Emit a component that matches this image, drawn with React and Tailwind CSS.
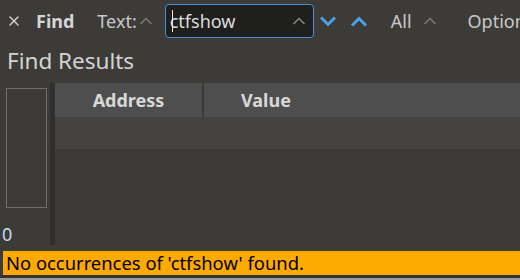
import { X } from "lucide-react";

const Caret = ({ className = "", up = true, color = "#7d7c79", stroke = 1.5 }) => (
  <svg width="14" height="10" viewBox="0 0 14 10" className={`shrink-0 ${className}`}>
    <polyline
      points={up ? "1.5,8 7,2.5 12.5,8" : "1.5,2 7,7.5 12.5,2"}
      fill="none"
      stroke={color}
      strokeWidth={stroke}
    />
  </svg>
);

const BlueChevron = ({ up, className = "" }) => (
  <svg width="18" height="11" viewBox="0 0 18 11" className={`shrink-0 ${className}`}>
    <polyline
      points={up ? "2,9.5 9,2.5 16,9.5" : "2,1.5 9,8.5 16,1.5"}
      fill="none"
      stroke="#4f9fe6"
      strokeWidth="3"
    />
  </svg>
);

export default function App() {
  return (
    <div
      className="w-[520px] h-[280px] bg-[#3c3b38] flex flex-col overflow-hidden text-[#d6d6d6]"
      style={{ fontFamily: '"Segoe UI", "Noto Sans", "Open Sans", sans-serif' }}
    >
      {/* toolbar */}
      <div className="h-[42px] flex items-center shrink-0 text-[18px] whitespace-nowrap">
        <X size={16} strokeWidth={2.2} className="ml-[6px] shrink-0 text-[#d0d0d0]" />
        <span className="ml-[14px] font-bold">Find</span>
        <span className="ml-[23px] text-[#c8c8c8]">Text:</span>
        <Caret className="ml-[2px]" />
        <div className="ml-[12px] w-[149px] h-[34px] shrink-0 rounded-[4px] border-[1.5px] border-[#4d8ed0] bg-[#1f1f1e] flex items-center pl-[4px] pr-[7px]">
          <span className="relative text-[#dcdcdc]">
            ctfshow
            <span className="absolute left-[2px] top-[2px] w-[1.5px] h-[22px] bg-[#e6e6e6]" />
          </span>
          <Caret className="ml-auto" color="#8a8a88" />
        </div>
        <BlueChevron className="ml-[5px]" />
        <BlueChevron up className="ml-[13px]" />
        <span className="ml-[23px] text-[#c8c8c8]">All</span>
        <Caret className="ml-[11px]" />
        <span className="ml-[31px] text-[#c8c8c8]">Options</span>
      </div>

      {/* title */}
      <div className="h-[39px] shrink-0 pl-[7px] pt-[5px] text-[22.5px] text-[#d4d4d4] leading-[28px]">
        Find Results
      </div>

      {/* results */}
      <div className="flex flex-1 min-h-0">
        <div className="w-[50px] flex flex-col shrink-0">
          <div className="ml-[6px] mt-[7px] w-[41px] h-[120px] border-[1.5px] border-[#6f6e6b]" />
          <div className="mt-auto mb-[7px] ml-[2px] text-[18px] leading-[20px] text-[#c3d9ee]">0</div>
        </div>
        <div className="w-[5px] mt-[2px] mb-[6px] bg-[#302f2d] shrink-0" />
        <div className="flex-1 flex flex-col pt-[2px]">
          <div className="h-[34px] bg-[#4e4e4e] flex text-[18px] font-bold text-[#d8d8d8]">
            <div className="w-[149px] flex items-center justify-center border-r-2 border-[#3a3a39]">Address</div>
            <div className="pl-[37px] flex items-center">Value</div>
          </div>
          <div className="h-[32px] bg-[#434240]" />
        </div>
      </div>

      {/* status */}
      <div className="h-[24px] ml-[3px] bg-[#ffaa00] text-black text-[18.4px] leading-[24px] pl-[3px] shrink-0">
        No occurrences of 'ctfshow' found.
      </div>
      <div className="h-[3px] bg-[#333230] shrink-0" />
      <div className="h-[2px] bg-[#9a9a9a] shrink-0" />
    </div>
  );
}
